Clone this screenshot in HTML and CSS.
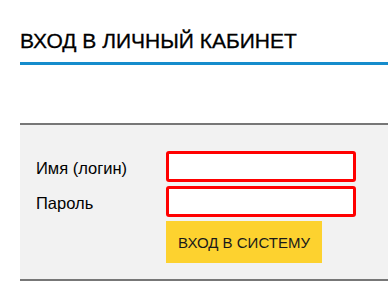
FILE: index.html
```html
<!DOCTYPE html>
<html lang="ru">
<head>
<meta charset="utf-8">
<title>Вход в личный кабинет</title>
<link rel="stylesheet" href="styles.css">
</head>
<body>
<div class="page">
  <h1 class="title">ВХОД В ЛИЧНЫЙ КАБИНЕТ</h1>
  <form class="login">
    <label class="label" for="login">Имя (логин)</label>
    <input class="field" id="login" type="text">
    <label class="label" for="pass">Пароль</label>
    <input class="field" id="pass" type="password">
    <span></span>
    <button class="btn" type="button">ВХОД В СИСТЕМУ</button>
  </form>
</div>
</body>
</html>
```
FILE: styles.css
```css
html, body {
  margin: 0;
  padding: 0;
  background: #fff;
}
body {
  font-family: "Liberation Sans", Arial, sans-serif;
  color: #000;
}
.page {
  padding: 26px 0 0 20px;
}
.title {
  margin: 0;
  font-size: 21px;
  font-weight: normal;
  line-height: 30px;
  padding-bottom: 6px;
  border-bottom: 3px solid #168ccc;
  color: #000;
  -webkit-text-stroke: 0.3px #000;
}
.login {
  margin-top: 58px;
  background: #f2f2f2;
  border-top: 2px solid #777;
  border-bottom: 2px solid #777;
  padding: 26px 0 16px 16px;
  display: grid;
  grid-template-columns: 130px 190px;
  row-gap: 4px;
  align-items: center;
}
.label {
  font-size: 16.5px;
  line-height: 20px;
  color: #000;
  padding-top: 2px;
}
.field {
  box-sizing: border-box;
  height: 31px;
  width: 190px;
  margin: 0;
  border: 3px solid #f00;
  border-radius: 3px;
  background: #fff;
  padding: 0 4px;
}
.btn {
  width: 156px;
  height: 42px;
  border: none;
  background: #fdd22f;
  color: #1a1a1a;
  font-family: "Liberation Sans", Arial, sans-serif;
  font-size: 15px;
  padding: 0;
  margin: 0;
  cursor: pointer;
}
```
